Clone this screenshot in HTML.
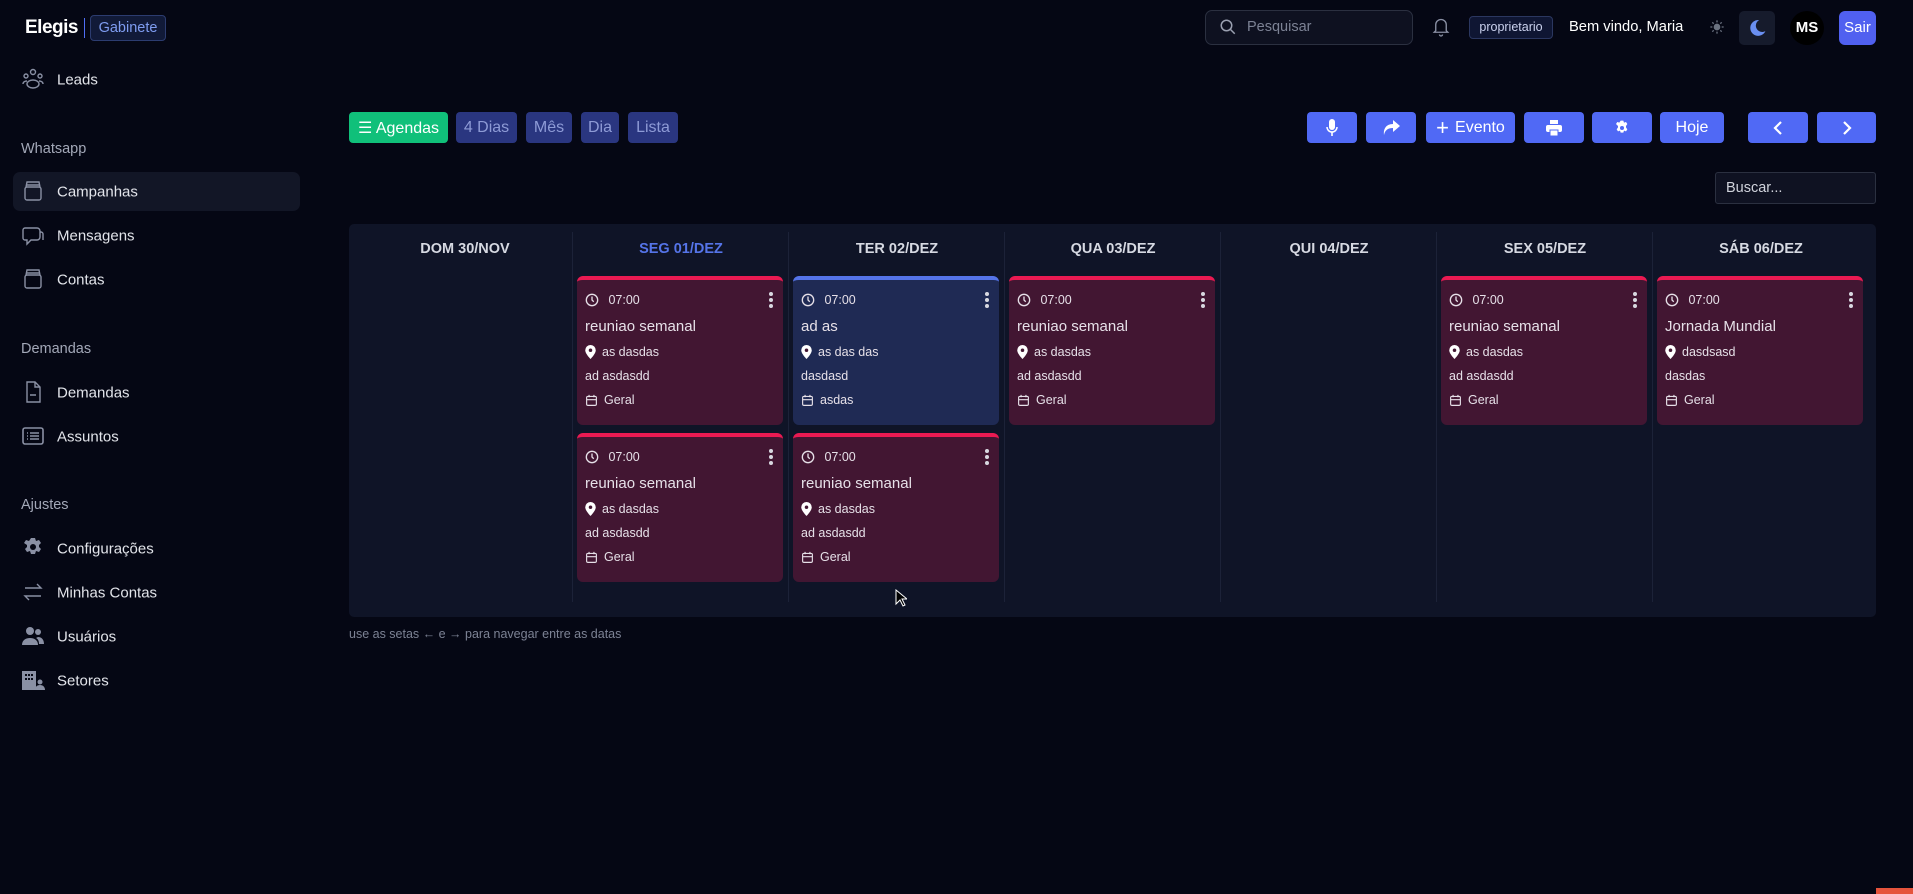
<!DOCTYPE html>
<html><head><meta charset="utf-8"><style>
*{box-sizing:border-box;margin:0;padding:0}
body{width:1913px;height:894px;background:#050714;font-family:"Liberation Sans",sans-serif;color:#e5e7eb;position:relative;overflow:hidden}
.a{position:absolute}
.side{font-size:15px;color:#e2e4ea}
.side .it{position:absolute;left:57px;transform:translateY(-45%)}
.side .ic{position:absolute;left:21px;width:24px;height:24px;transform:translateY(-50%)}
.hd{position:absolute;left:21px;font-size:14.5px;color:#a3a8b8;transform:translateY(-45%)}
.tb{position:absolute;top:112px;height:31px;border-radius:4px;font-size:16px;display:flex;align-items:center;justify-content:center}
.v{background:#2a3680;color:#8e9bd6}
.b{background:#5069f5;color:#fff}
.panel{left:349px;top:224px;width:1527px;height:393px;background:#0f1427;border-radius:5px}
.col{position:absolute;top:232px;height:370px;width:1px;background:#1c2238}
.dh{position:absolute;top:241px;width:218px;text-align:center;font-size:14.5px;font-weight:bold;color:#d6d9e2}
.card{position:absolute;width:206px;height:149px;background:#421632;border-radius:6px;border-top:4px solid #ea1a52;font-size:12.5px;color:#e6e0e8}
.card.bl{background:#1f2a54;border-top-color:#5574e8}
.card div{position:absolute;left:8px;display:flex;align-items:center;gap:6px}
.card .t1{top:13px}.card .t2{top:38px;font-size:15px}.card .t3{top:65px}.card .t4{top:89px}.card .t5{top:113px}
.dots{position:absolute;right:10px;top:12px;width:4px}
.dots i{display:block;width:4px;height:4px;border-radius:2px;background:#d8d8e0;margin-bottom:2px}
</style></head><body>
<div class="a" style="left:25px;top:15px;font-size:19px;font-weight:bold;color:#fff;letter-spacing:-0.5px;line-height:26px">Elegis</div>
<div class="a" style="left:84px;top:18px;width:1px;height:20px;background:#4f6ef5"></div>
<div class="a" style="left:90px;top:15px;width:76px;height:26px;border:1px solid #2c3c70;border-radius:4px;background:#111a38;color:#7e9cf0;font-size:14.5px;text-align:center;line-height:24px">Gabinete</div>

<div class="side">
<svg class="ic" style="top:79px" viewBox="0 0 24 24" fill="none" stroke="#8a90a4" stroke-width="1.4"><circle cx="12" cy="5" r="2.5"/><circle cx="5" cy="9" r="2"/><circle cx="19" cy="9" r="2"/><ellipse cx="12" cy="17" rx="6" ry="4"/><path d="M2 17c0-2 2-3 4-3M22 17c0-2-2-3-4-3"/></svg><span class="it" style="top:79px">Leads</span>
<div class="hd" style="top:148px">Whatsapp</div>
<div class="a" style="left:13px;top:172px;width:287px;height:39px;background:#121626;border-radius:7px"></div>
<svg class="ic" style="top:191px" viewBox="0 0 24 24" fill="none" stroke="#8a90a4" stroke-width="1.4"><rect x="4" y="8" width="16" height="13" rx="2"/><path d="M5 8l1-5h12l1 5M5 6h14"/></svg><span class="it" style="top:191px">Campanhas</span>
<svg class="ic" style="top:235px" viewBox="0 0 24 24" fill="none" stroke="#8a90a4" stroke-width="1.4"><path d="M4 5h12a3 3 0 013 3v6a3 3 0 01-3 3h-6l-4 4v-4H4a2 2 0 01-2-2V7a2 2 0 012-2z"/><path d="M19 9h1a2 2 0 012 2v6"/></svg><span class="it" style="top:235px">Mensagens</span>
<svg class="ic" style="top:279px" viewBox="0 0 24 24" fill="none" stroke="#8a90a4" stroke-width="1.4"><rect x="4" y="8" width="16" height="13" rx="2"/><path d="M5 8l1-5h12l1 5M5 6h14"/></svg><span class="it" style="top:279px">Contas</span>
<div class="hd" style="top:348px">Demandas</div>
<svg class="ic" style="top:392px" viewBox="0 0 24 24" fill="none" stroke="#8a90a4" stroke-width="1.4"><path d="M6 2h8l5 5v15H6z"/><path d="M14 2v5h5M9 15h6"/></svg><span class="it" style="top:392px">Demandas</span>
<svg class="ic" style="top:436px" viewBox="0 0 24 24" fill="none" stroke="#8a90a4" stroke-width="1.6"><rect x="2" y="4" width="20" height="16" rx="2"/><path d="M6 9h1M6 12h1M6 15h1M9 9h9M9 12h9M9 15h9"/></svg><span class="it" style="top:436px">Assuntos</span>
<div class="hd" style="top:504px">Ajustes</div>
<svg class="ic" style="top:548px" viewBox="0 0 24 24" fill="#8a90a4"><path d="M10 2h4l1 3 3-1 2 3-2 2 0 2 2 2-2 3-3-1-1 3h-4l-1-3-3 1-2-3 2-2v-2L3 7l2-3 3 1z"/><circle cx="12" cy="11" r="3" fill="#050714"/></svg><span class="it" style="top:548px">Configurações</span>
<svg class="ic" style="top:592px" viewBox="0 0 24 24" fill="none" stroke="#8a90a4" stroke-width="1.4"><path d="M4 8h16l-4-4M20 16H4l4 4"/></svg><span class="it" style="top:592px">Minhas Contas</span>
<svg class="ic" style="top:636px" viewBox="0 0 24 24" fill="#8a90a4"><circle cx="9" cy="7" r="4"/><circle cx="17" cy="8" r="3"/><path d="M1 21c0-5 4-7 8-7s8 2 8 7zM17 13c3 0 6 2 6 7h-5c0-3-1-5-3-6z"/></svg><span class="it" style="top:636px">Usuários</span>
<svg class="ic" style="top:680px" viewBox="0 0 24 24" fill="#8a90a4"><rect x="1" y="3" width="14" height="19"/><circle cx="19" cy="14" r="2.5"/><path d="M14 22c0-3 2-5 5-5s5 2 5 5z"/><g fill="#050714"><rect x="4" y="6" width="2" height="2"/><rect x="7" y="6" width="2" height="2"/><rect x="10" y="6" width="2" height="2"/><rect x="4" y="10" width="2" height="2"/><rect x="7" y="10" width="2" height="2"/><rect x="10" y="10" width="2" height="2"/></g></svg><span class="it" style="top:680px">Setores</span>
</div>

<!-- top bar -->
<div class="a" style="left:1205px;top:10px;width:208px;height:35px;border:1px solid #2b3040;border-radius:7px;background:#0e1120"></div>
<svg class="a" style="left:1219px;top:18px" width="18" height="18" viewBox="0 0 24 24" fill="none" stroke="#9aa0b0" stroke-width="2"><circle cx="10" cy="10" r="7"/><path d="M15 15l6 6"/></svg>
<div class="a" style="left:1247px;top:19px;font-size:14.5px;color:#7c8294">Pesquisar</div>
<svg class="a" style="left:1432px;top:16px" width="18" height="22" viewBox="0 0 24 28" fill="none" stroke="#8a90a4" stroke-width="1.8"><path d="M5 19V11a7 7 0 0114 0v8l2 2H3zM10 24a2 2 0 004 0"/></svg>
<div class="a" style="left:1469px;top:16px;width:84px;height:23px;border:1px solid #2b3760;border-radius:4px;background:#0f1633;color:#cbd2ee;font-size:12.5px;text-align:center;line-height:21px">proprietario</div>
<div class="a" style="left:1569px;top:19px;font-size:14.7px;color:#fff">Bem vindo, Maria</div>
<svg class="a" style="left:1709px;top:19px" width="16" height="16" viewBox="0 0 24 24" fill="#6b7280" stroke="#6b7280" stroke-width="2"><circle cx="12" cy="12" r="4"/><path d="M12 2v3M12 19v3M2 12h3M19 12h3M5 5l2 2M17 17l2 2M5 19l2-2M17 7l2-2"/></svg>
<div class="a" style="left:1739px;top:11px;width:36px;height:34px;border-radius:5px;background:#161b2c"></div>
<svg class="a" style="left:1748px;top:18px" width="19" height="20" viewBox="0 0 24 24" fill="#6a8ff0"><path d="M14 2a10 10 0 108 14A8 8 0 0114 2z"/></svg>
<div class="a" style="left:1790px;top:11px;width:34px;height:34px;border-radius:17px;background:#000;color:#fff;font-size:15px;font-weight:bold;text-align:center;line-height:34px">MS</div>
<div class="a" style="left:1839px;top:11px;width:37px;height:34px;border-radius:6px;background:#5060f0;color:#fff;font-size:15px;text-align:center;line-height:34px">Sair</div>

<!-- toolbar -->
<div class="tb" style="left:349px;width:99px;background:#10c07a;color:#fff">☰ Agendas</div>
<div class="tb v" style="left:456px;width:61px">4 Dias</div>
<div class="tb v" style="left:526px;width:46px">Mês</div>
<div class="tb v" style="left:581px;width:38px">Dia</div>
<div class="tb v" style="left:628px;width:50px">Lista</div>

<div class="tb b" style="left:1307px;width:50px"><svg width="12" height="18" viewBox="0 0 12 18" fill="#fff"><rect x="3" y="0" width="6" height="11" rx="3"/><path d="M1 8a5 5 0 0010 0" stroke="#fff" stroke-width="1.5" fill="none"/><rect x="5.2" y="13" width="1.6" height="4"/></svg></div>
<div class="tb b" style="left:1366px;width:50px"><svg width="18" height="16" viewBox="0 0 18 16" fill="#fff"><path d="M11 0l7 6-7 6V8C6 8 3 10 2 15 1 8 5 4 11 4z"/></svg></div>
<div class="tb b" style="left:1426px;width:89px;gap:6px"><span style="font-size:22px;line-height:1">+</span>Evento</div>
<div class="tb b" style="left:1524px;width:60px"><svg width="16" height="16" viewBox="0 0 16 16" fill="#fff"><rect x="4" y="0" width="8" height="4"/><rect x="0" y="5" width="16" height="7" rx="2"/><rect x="4" y="10" width="8" height="6" fill="#fff" stroke="#5069f5" stroke-width="1"/></svg></div>
<div class="tb b" style="left:1592px;width:60px"><svg width="16" height="16" viewBox="0 0 24 24" fill="#fff"><path d="M10 1h4l1 3 3-1 2 3-2 3v2l2 3-2 3-3-1-1 3h-4l-1-3-3 1-2-3 2-3v-2L3 6l2-3 3 1z"/><circle cx="12" cy="12" r="3" fill="#5069f5"/></svg></div>
<div class="tb b" style="left:1660px;width:64px">Hoje</div>
<div class="tb b" style="left:1748px;width:60px"><svg width="10" height="16" viewBox="0 0 10 16" fill="none" stroke="#fff" stroke-width="2.2"><path d="M8 2L2 8l6 6"/></svg></div>
<div class="tb b" style="left:1817px;width:59px"><svg width="10" height="16" viewBox="0 0 10 16" fill="none" stroke="#fff" stroke-width="2.2"><path d="M2 2l6 6-6 6"/></svg></div>

<div class="a" style="left:1715px;top:172px;width:161px;height:32px;border:1px solid #2b3040;border-radius:3px;background:#0f1222;color:#d0d3dc;font-size:14.5px;padding-left:10px;line-height:30px">Buscar...</div>

<!-- calendar -->
<div class="a panel"></div>
<div class="col" style="left:572px"></div><div class="col" style="left:788px"></div><div class="col" style="left:1004px"></div><div class="col" style="left:1220px"></div><div class="col" style="left:1436px"></div><div class="col" style="left:1652px"></div>
<div class="dh" style="left:356px">DOM 30/NOV</div>
<div class="dh" style="left:572px;color:#5574e8">SEG 01/DEZ</div>
<div class="dh" style="left:788px">TER 02/DEZ</div>
<div class="dh" style="left:1004px">QUA 03/DEZ</div>
<div class="dh" style="left:1220px">QUI 04/DEZ</div>
<div class="dh" style="left:1436px">SEX 05/DEZ</div>
<div class="dh" style="left:1652px">SÁB 06/DEZ</div>

<svg width="0" height="0" style="position:absolute"><defs>
<symbol id="clk" viewBox="0 0 16 16"><circle cx="8" cy="8" r="6.5" fill="none" stroke="#e6e0e8" stroke-width="1.5"/><path d="M8 4v4l2 2" fill="none" stroke="#e6e0e8" stroke-width="1.5"/></symbol>
<symbol id="pin" viewBox="0 0 12 16"><path d="M6 0a6 6 0 00-6 6c0 4 6 10 6 10s6-6 6-10a6 6 0 00-6-6z" fill="#fff"/><circle cx="6" cy="6" r="2" fill="#421632"/></symbol>
<symbol id="cal" viewBox="0 0 16 16"><rect x="2" y="3" width="12" height="11" rx="1.5" fill="none" stroke="#e6e0e8" stroke-width="1.4"/><path d="M2 7h12M5 1v3M11 1v3" stroke="#e6e0e8" stroke-width="1.4"/></symbol>
</defs></svg>

<!-- cards -->
<div class="card" style="left:577px;top:276px"><div class="t1"><svg width="14" height="14"><use href="#clk"/></svg>&nbsp;07:00</div><span class="dots"><i></i><i></i><i></i></span><div class="t2">reuniao semanal</div><div class="t3"><svg width="11" height="14"><use href="#pin"/></svg>as dasdas</div><div class="t4">ad asdasdd</div><div class="t5"><svg width="13" height="13"><use href="#cal"/></svg>Geral</div></div>
<div class="card bl" style="left:793px;top:276px"><div class="t1"><svg width="14" height="14"><use href="#clk"/></svg>&nbsp;07:00</div><span class="dots"><i></i><i></i><i></i></span><div class="t2">ad as</div><div class="t3"><svg width="11" height="14"><use href="#pin"/></svg>as das das</div><div class="t4">dasdasd</div><div class="t5"><svg width="13" height="13"><use href="#cal"/></svg>asdas</div></div>
<div class="card" style="left:1009px;top:276px"><div class="t1"><svg width="14" height="14"><use href="#clk"/></svg>&nbsp;07:00</div><span class="dots"><i></i><i></i><i></i></span><div class="t2">reuniao semanal</div><div class="t3"><svg width="11" height="14"><use href="#pin"/></svg>as dasdas</div><div class="t4">ad asdasdd</div><div class="t5"><svg width="13" height="13"><use href="#cal"/></svg>Geral</div></div>
<div class="card" style="left:1441px;top:276px"><div class="t1"><svg width="14" height="14"><use href="#clk"/></svg>&nbsp;07:00</div><span class="dots"><i></i><i></i><i></i></span><div class="t2">reuniao semanal</div><div class="t3"><svg width="11" height="14"><use href="#pin"/></svg>as dasdas</div><div class="t4">ad asdasdd</div><div class="t5"><svg width="13" height="13"><use href="#cal"/></svg>Geral</div></div>
<div class="card" style="left:1657px;top:276px"><div class="t1"><svg width="14" height="14"><use href="#clk"/></svg>&nbsp;07:00</div><span class="dots"><i></i><i></i><i></i></span><div class="t2">Jornada Mundial</div><div class="t3"><svg width="11" height="14"><use href="#pin"/></svg>dasdsasd</div><div class="t4">dasdas</div><div class="t5"><svg width="13" height="13"><use href="#cal"/></svg>Geral</div></div>
<div class="card" style="left:577px;top:433px"><div class="t1"><svg width="14" height="14"><use href="#clk"/></svg>&nbsp;07:00</div><span class="dots"><i></i><i></i><i></i></span><div class="t2">reuniao semanal</div><div class="t3"><svg width="11" height="14"><use href="#pin"/></svg>as dasdas</div><div class="t4">ad asdasdd</div><div class="t5"><svg width="13" height="13"><use href="#cal"/></svg>Geral</div></div>
<div class="card" style="left:793px;top:433px"><div class="t1"><svg width="14" height="14"><use href="#clk"/></svg>&nbsp;07:00</div><span class="dots"><i></i><i></i><i></i></span><div class="t2">reuniao semanal</div><div class="t3"><svg width="11" height="14"><use href="#pin"/></svg>as dasdas</div><div class="t4">ad asdasdd</div><div class="t5"><svg width="13" height="13"><use href="#cal"/></svg>Geral</div></div>

<svg class="a" style="left:895px;top:589px" width="12" height="18" viewBox="0 0 12 18"><path d="M1 1v14l4-4 3 6 2-1-3-6h5z" fill="#000" stroke="#fff" stroke-width="1"/></svg>

<div class="a" style="left:349px;top:627px;font-size:12.5px;color:#7c8294">use as setas ← e → para navegar entre as datas</div>
<div class="a" style="left:1876px;top:888px;width:37px;height:6px;background:#e5533c"></div>
</body></html>
